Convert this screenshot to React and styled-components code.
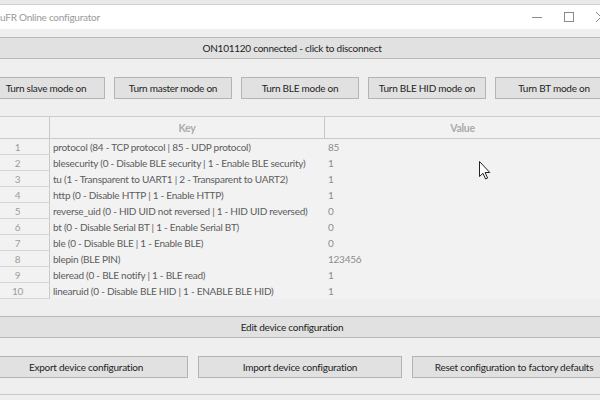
import React from 'react';
import styled, { createGlobalStyle } from 'styled-components';

const GlobalStyle = createGlobalStyle`
    html, body {
        margin: 0;
        padding: 0;
        background: #e9e9e9;
        overflow: hidden;
    }
    body {
        font-family: Lato, "Noto Sans", sans-serif;
        letter-spacing: -0.25px;
    }
`;

const modeButtons = [
    'Turn slave mode on',
    'Turn master mode on',
    'Turn BLE mode on',
    'Turn BLE HID mode on',
    'Turn BT mode on'
];

const configRows = [
    { key: 'protocol (84 - TCP protocol | 85 - UDP protocol)', value: '85' },
    { key: 'blesecurity (0 - Disable BLE security | 1 - Enable BLE security)', value: '1' },
    { key: 'tu (1 - Transparent to UART1 | 2 - Transparent to UART2)', value: '1' },
    { key: 'http (0 - Disable HTTP | 1 - Enable HTTP)', value: '1' },
    { key: 'reverse_uid (0 - HID UID not reversed | 1 - HID UID reversed)', value: '0' },
    { key: 'bt (0 - Disable Serial BT | 1 - Enable Serial BT)', value: '0' },
    { key: 'ble (0 - Disable BLE | 1 - Enable BLE)', value: '0' },
    { key: 'blepin (BLE PIN)', value: '123456' },
    { key: 'bleread (0 - BLE notify | 1 - BLE read)', value: '1' },
    { key: 'linearuid (0 - Disable BLE HID | 1 - ENABLE BLE HID)', value: '1' }
];

const fileButtons = [
    'Export device configuration',
    'Import device configuration',
    'Reset configuration to factory defaults'
];

const App = () => {
    return (
        <React.Fragment>
            <GlobalStyle />
            <Window>
                <TitleBar>
                    <Title>uFR Online configurator</Title>
                    <Controls>
                        <Control>
                            <svg width="10" height="10" viewBox="0 0 10 10">
                                <line x1="0" y1="5.5" x2="10" y2="5.5" stroke="#8a8a8a" strokeWidth="1" />
                            </svg>
                        </Control>
                        <Control>
                            <svg width="10" height="10" viewBox="0 0 10 10">
                                <rect x="0.5" y="0.5" width="9" height="9" fill="none" stroke="#8a8a8a" strokeWidth="1" />
                            </svg>
                        </Control>
                        <Control>
                            <svg width="10" height="10" viewBox="0 0 10 10">
                                <path d="M0 0 L10 10 M10 0 L0 10" stroke="#8a8a8a" strokeWidth="1" />
                            </svg>
                        </Control>
                    </Controls>
                </TitleBar>

                <Client>
                    <Bar top={8}>ON101120 connected - click to disconnect</Bar>

                    <ModeRow>
                        {modeButtons.map((label) => (
                            <Button key={label} width={118}>{label}</Button>
                        ))}
                    </ModeRow>

                    <Table>
                        <HeaderRow>
                            <IndexHead />
                            <Head divider>Key</Head>
                            <Head>Value</Head>
                        </HeaderRow>
                        {configRows.map((row, index) => (
                            <Row key={row.key}>
                                <IndexCell>{index + 1}</IndexCell>
                                <KeyCell>{row.key}</KeyCell>
                                <ValueCell>{row.value}</ValueCell>
                            </Row>
                        ))}
                    </Table>

                    <Bar top={17}>Edit device configuration</Bar>

                    <FileRow>
                        {fileButtons.map((label) => (
                            <Button key={label} width={204}>{label}</Button>
                        ))}
                    </FileRow>

                    <BottomEdge />
                </Client>

                <Cursor width="12" height="19" viewBox="0 0 12 19">
                    <path
                        d="M0.5 0.5 L0.5 15.5 L4 12.3 L6.6 18 L8.6 17.1 L6.1 11.5 L10.8 11.5 Z"
                        fill="#fff"
                        stroke="#222"
                        strokeWidth="1"
                        strokeLinejoin="round"
                    />
                </Cursor>
            </Window>
        </React.Fragment>
    );
};

const Window = styled.div`
    position: relative;
    width: 632px;
    height: 400px;
    margin-left: -16px;
    padding-top: 4px;
    box-sizing: border-box;
`;

const TitleBar = styled.div`
    height: 24px;
    background: #ffffff;
    border-top: 1px solid #cfcfcf;
    display: flex;
    align-items: center;
    justify-content: space-between;
`;

const Title = styled.span`
    padding-left: 16px;
    font-size: 10px;
    color: #9a9a9a;
`;

const Controls = styled.div`
    display: flex;
    height: 100%;
    margin-right: -1px;
`;

const Control = styled.div`
    width: 32px;
    height: 100%;
    display: flex;
    align-items: center;
    justify-content: center;
`;

const Client = styled.div`
    background: #efefef;
    height: 371px;
    display: flex;
    flex-direction: column;
`;

const Bar = styled.div`
    margin-top: ${(props) => props.top}px;
    margin-right: 16px;
    height: 22px;
    box-sizing: border-box;
    background: #e1e1e1;
    border-top: 1px solid #b9b9b9;
    border-bottom: 1px solid #b9b9b9;
    display: flex;
    align-items: center;
    justify-content: center;
    font-size: 10px;
    color: #1e1e1e;
`;

const ModeRow = styled.div`
    margin-top: 18px;
    padding-left: 3px;
    display: flex;
    gap: 9px;
`;

const FileRow = styled.div`
    margin-top: 18px;
    display: flex;
    gap: 10px;
`;

const Button = styled.div`
    flex: none;
    width: ${(props) => props.width}px;
    height: 22px;
    box-sizing: border-box;
    background: #e1e1e1;
    border: 1px solid #b4b4b4;
    display: flex;
    align-items: center;
    justify-content: center;
    font-size: 10px;
    color: #1e1e1e;
    white-space: nowrap;
`;

const Table = styled.div`
    margin-top: 17px;
    width: 616px;
    background: #f2f2f2;
    border-top: 1px solid #cdcdcd;
    display: flex;
    flex-direction: column;
`;

const HeaderRow = styled.div`
    display: grid;
    grid-template-columns: 66px 275px 275px;
    height: 22px;
    box-sizing: border-box;
    border-bottom: 1px solid #c9c9c9;
`;

const IndexHead = styled.div`
    border-right: 1px solid #c9c9c9;
`;

const Head = styled.div`
    display: flex;
    align-items: center;
    justify-content: center;
    font-size: 10.5px;
    font-weight: 700;
    color: #ababab;
    border-right: ${(props) => (props.divider ? '1px solid #c9c9c9' : 'none')};
`;

const Row = styled.div`
    display: grid;
    grid-template-columns: 66px 275px 275px;
    height: 16px;
`;

const IndexCell = styled.div`
    box-sizing: border-box;
    border-right: 1px solid #c9c9c9;
    border-bottom: 1px solid #d6d6d6;
    display: flex;
    align-items: center;
    justify-content: center;
    padding-left: 2px;
    font-size: 10px;
    color: #9c9c9c;
`;

const KeyCell = styled.div`
    display: flex;
    align-items: center;
    padding-left: 3px;
    font-size: 10px;
    color: #5c5c5c;
    white-space: nowrap;
    overflow: hidden;
`;

const ValueCell = styled.div`
    display: flex;
    align-items: center;
    padding-left: 3px;
    font-size: 10px;
    color: #8c8c8c;
`;

const BottomEdge = styled.div`
    margin-top: 16px;
    height: 1px;
    background: #c9c9c9;
`;

const Cursor = styled.svg`
    position: absolute;
    left: 495px;
    top: 161px;
`;

export default App;
